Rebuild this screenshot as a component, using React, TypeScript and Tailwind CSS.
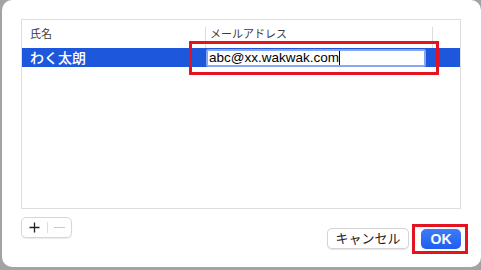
import React from "react";

const jp = { fontFamily: '"Liberation Sans", "Noto Sans CJK JP", sans-serif' };

export default function App() {
  return (
    <div className="w-[481px] h-[270px] bg-[#a3a3a3] overflow-hidden" style={jp}>
      <div className="relative ml-[2px] w-[479px] h-[267px] bg-white rounded-[10px] pt-[19px] pl-[19px]">
        {/* table */}
        <div className="w-[440px] h-[190px] border border-[#dedede] bg-white flex flex-col">
          <div className="h-[28px] flex items-end">
            <div className="w-[183px] h-[28px] pl-[8px] pt-[7px] text-[11px] leading-[14px] text-[#3a3a3a]">氏名</div>
            <div className="w-[1px] h-[21px] bg-[#dcdcdc]" />
            <div className="w-[226px] h-[28px] pl-[4px] pt-[7px] text-[11px] leading-[14px] text-[#3a3a3a]">メールアドレス</div>
            <div className="w-[1px] h-[21px] bg-[#dcdcdc]" />
          </div>
          <div className="h-[19px] bg-[#1d58dc] flex items-center">
            <div className="w-[184px] pl-[8px] text-[14px] font-medium text-white leading-[16px]">わく太朗</div>
            <div className="w-[220px] h-[18px] bg-white border-[2px] border-[#86a6f2] rounded-[2px] flex items-center pl-[1px]">
              <span className="text-[13.5px] leading-[14px] text-black">abc@xx.wakwak.com</span>
              <span className="w-[1px] h-[14px] bg-black" />
            </div>
          </div>
        </div>
        {/* bottom row */}
        <div className="flex items-start w-[440px] mt-[8px]">
          <div className="w-[51px] h-[21px] border border-[#d6d6d6] rounded-[5px] shadow-[0_1px_1px_rgba(0,0,0,0.08)] flex items-center">
            <div className="w-[25px] flex items-center justify-center">
              <svg width="11" height="11" viewBox="0 0 11 11">
                <path d="M5.5 0.5V10.5M0.5 5.5H10.5" stroke="#222" strokeWidth="1.3" />
              </svg>
            </div>
            <div className="w-[1px] h-[11px] bg-[#dcdcdc]" />
            <div className="flex-1 flex items-center justify-center">
              <div className="w-[11px] h-[1px] bg-[#c8c8c8]" />
            </div>
          </div>
          <div className="flex-1" />
          <div className="mt-[11px] w-[82px] h-[21px] border border-[#d4d4d4] rounded-[5px] bg-white shadow-[0_1px_1px_rgba(0,0,0,0.1)] flex items-center justify-center text-[13px] text-[#222]">
            キャンセル
          </div>
          <div className="ml-[12px] mt-[12px] w-[40px] h-[20px] rounded-[5px] bg-gradient-to-b from-[#3d7bf7] to-[#1f5ef0] flex items-center justify-center text-[14px] font-bold text-white">
            OK
          </div>
        </div>
        {/* annotations */}
        <div className="absolute left-[187px] top-[41px] w-[250px] h-[34px] border-[3px] border-[#e3141f]" />
        <div className="absolute left-[410px] top-[224px] w-[56px] h-[30px] border-[3px] border-[#e3141f]" />
      </div>
    </div>
  );
}
